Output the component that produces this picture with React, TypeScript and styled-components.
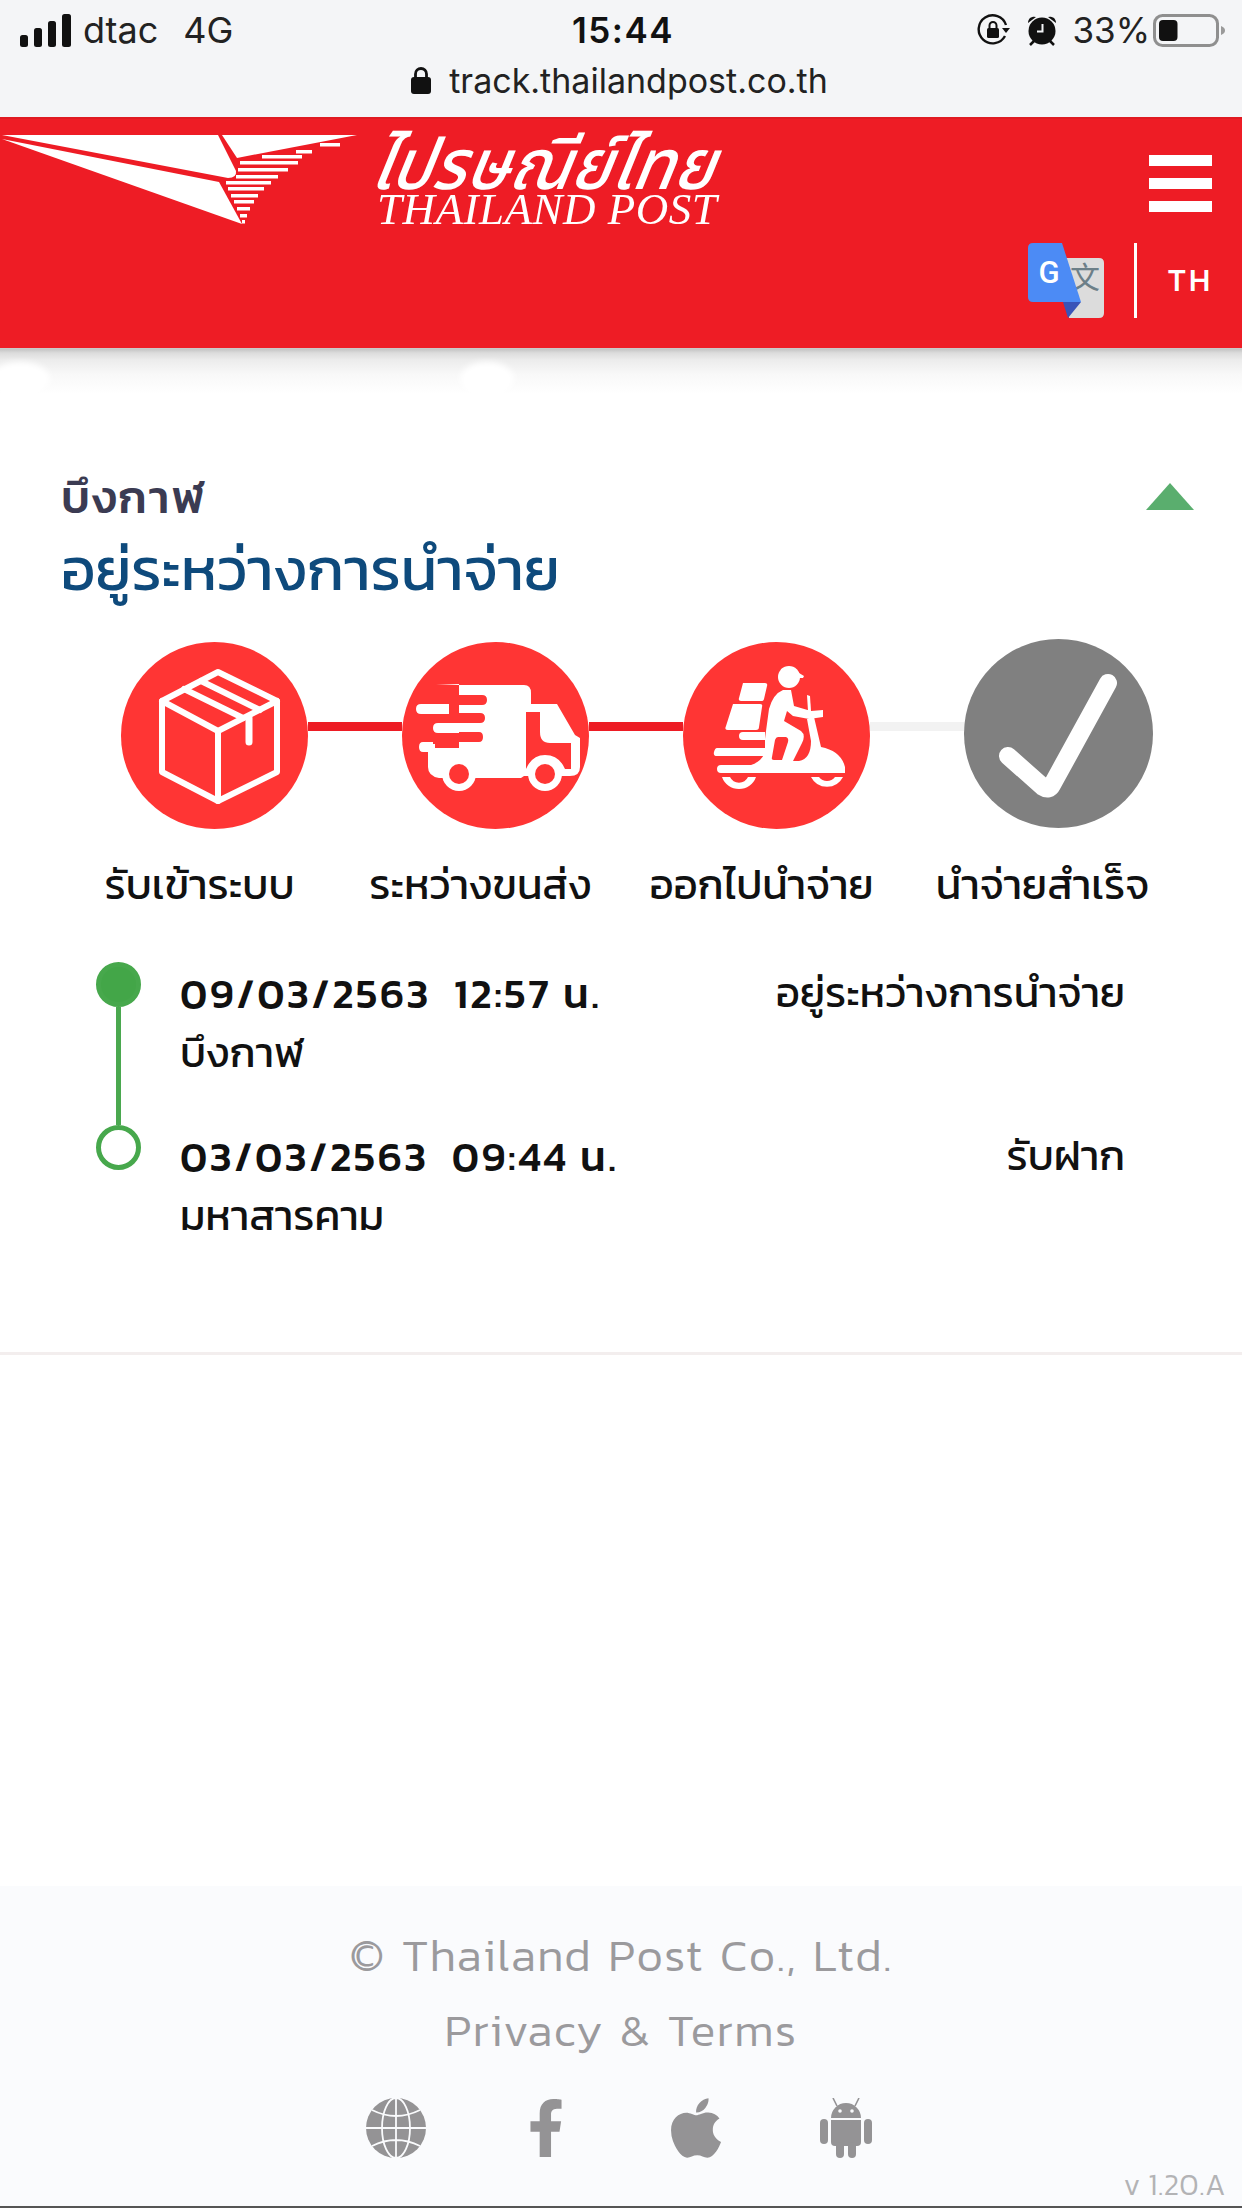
import React from 'react';
import styled, { createGlobalStyle } from 'styled-components';
import { FaFacebookF, FaApple } from 'react-icons/fa';

const Global = createGlobalStyle`
  html, body { margin: 0; padding: 0; background: #fff; }
  * { box-sizing: border-box; }
`;
const Page = styled.div`
  width: 1242px; height: 2208px; display: flex; flex-direction: column; overflow: hidden;
  font-family: Kanit, "Noto Sans Thai", "Noto Sans", sans-serif; color: #111;
`;

/* ---- status bar ---- */
const StatusBar = styled.div`
  height: 117px; background: #f4f5f7; padding: 13px 16px 0 20px; flex: none;
  font-family: Inter, "Liberation Sans", sans-serif; color: #222;
`;
const StatusRow = styled.div`
  display: grid; grid-template-columns: 1fr auto 1fr; align-items: center; height: 34px;
`;
const StatusLeft = styled.div`display: flex; align-items: center; gap: 12px;`;
const StatusRight = styled.div`display: flex; align-items: center; justify-content: flex-end;`;
const Carrier = styled.span<{ $gap: number }>`
  font-size: 36px; line-height: 34px; margin-right: ${p => p.$gap}px; font-weight: 400;
`;
const Clock = styled.span`font-size: 35px; line-height: 34px; font-weight: 600; letter-spacing: 1.5px; color: #111;`;
const Percent = styled.span`font-size: 35px; line-height: 34px; margin: 0 3px 0 15px;`;
const UrlRow = styled.div`
  display: flex; align-items: center; justify-content: center; gap: 18px; margin: 16px 0 0 -7px; height: 34px;
  font-size: 34px; color: #222;
`;
const StatusIcon = styled.svg`display: block; flex: none;`;
const RotLockIcon = styled(StatusIcon)`margin-right: 16px;`;

/* ---- header ---- */
const Header = styled.header`
  height: 231px; background: #ee1c25; flex: none; display: flex; justify-content: space-between; align-items: flex-start;
  padding: 15px 30px 0 0; border-top: 2px solid #e01a22; box-shadow: 0 1px 0 #c9c9c9;
  position: relative; z-index: 1;
`;
const Logo = styled.div`display: flex; align-items: flex-start; gap: 20px; color: #fff;`;
const PlaneMark = styled.svg`display: block; flex: none;`;
const LogoWords = styled.div`
  display: flex; flex-direction: column; width: 344px; overflow: visible;
  font-family: "Liberation Serif", serif; font-style: italic; color: #fff;
`;
const LogoThai = styled.span`
  font-size: 67px; line-height: 60px; height: 58px; white-space: nowrap; font-family: "Noto Sans Thai", sans-serif; font-weight: 500;
  transform-origin: left top; transform: scale(1.0, 1.05) skewX(-10deg); margin-top: 2px;
`;
const LogoLatin = styled.span`
  font-size: 42px; line-height: 30px; white-space: nowrap; transform-origin: left top; transform: scale(1.07, 1.05); letter-spacing: 0.5px; font-weight: 400;
`;
const HeaderRight = styled.div`display: flex; flex-direction: column; align-items: flex-end; margin-top: 21px;`;
const Burger = styled.div`display: flex; flex-direction: column; gap: 12px;`;
const BurgerBar = styled.span`display: block; width: 63px; height: 11px; background: #fff;`;
const LangRow = styled.div`display: flex; align-items: center; margin-top: 31px; height: 75px;`;
const LangDivider = styled.span`display: block; width: 3px; height: 75px; background: #fff; margin: 0 30px 0 30px;`;
const LangText = styled.span`font-size: 29px; color: #fff; letter-spacing: 2.5px; font-family: Inter, sans-serif; font-weight: 600; margin-right: -1px;`;
const TranslateMark = styled.svg`display: block;`;

/* ---- main ---- */
const Main = styled.main`flex: 1; display: flex; flex-direction: column; position: relative;`;
const Shade = styled.div`
  position: absolute; left: 0; right: 0; top: 0; height: 46px;
  background: linear-gradient(#bdbdbd 0, #dcdcdc 5px, #ececec 12px, #f8f8f8 26px, #fff 100%);
`;
const Blob = styled.div<{ $x: number; $w: number }>`
  position: absolute; top: 14px; left: ${p => p.$x}px; width: ${p => p.$w}px; height: 34px; background: #fff; border-radius: 50%; filter: blur(3px);
`;
const Card = styled.section`
  height: 1007px; border-bottom: 3px solid #f3eeee; padding: 119px 48px 0 0; position: relative; flex: none;
`;
const TitleRow = styled.div`display: flex; justify-content: space-between; align-items: flex-start; padding-left: 61px;`;
const Province = styled.div`font-size: 46px; line-height: 60px; font-weight: 500; color: #3b3b52; letter-spacing: 2px;`;
const Status = styled.div`font-size: 60px; line-height: 74px; font-weight: 400; color: #0e4a7c; margin-top: 5px; white-space: nowrap;`;
const Caret = styled.div`
  width: 0; height: 0; margin-top: 16px; border-left: 24px solid transparent; border-right: 24px solid transparent; border-bottom: 27px solid #5aae6e;
`;
const Track = styled.div`display: flex; align-items: flex-start; margin: 33px 0 0 121px; height: 191px;`;
const Circle = styled.div<{ $done: boolean }>`
  width: ${p => (p.$done ? 187 : 189)}px; height: ${p => (p.$done ? 187 : 189)}px; margin-top: ${p => (p.$done ? 3 : 0)}px;
  border-radius: 50%; background: ${p => (p.$done ? '#ff3534' : '#808080')}; flex: none;
`;
const Link = styled.div<{ $done: boolean }>`
  width: 94px; height: 9px; margin-top: 83px; background: ${p => (p.$done ? '#ed1c24' : '#f2f2f2')}; flex: none;
`;
const Labels = styled.div`display: grid; grid-template-columns: repeat(4, 281px); margin: 25px 0 0 59px;`;
const StepLabel = styled.div`
  font-size: 42px; line-height: 60px; text-align: center; white-space: nowrap; color: #111; font-weight: 400;
`;
const Timeline = styled.div`display: flex; flex-direction: column; margin: 47px 0 0 96px; padding-right: 69px;`;
const Entry = styled.div`display: flex; height: 163px; gap: 39px;`;
const Rail = styled.div`display: flex; flex-direction: column; align-items: center; width: 45px; flex: none;`;
const Dot = styled.span<{ $filled: boolean }>`
  display: block; width: 45px; height: 45px; border-radius: 50%; flex: none;
  border: 5px solid #47a84c; background: ${p => (p.$filled ? '#43a648' : '#fff')};
`;
const RailLine = styled.span`display: block; width: 5px; flex: 1; background: #4aa84f;`;
const EntryBody = styled.div`flex: 1; padding-top: 1px;`;
const EntryTop = styled.div`display: flex; justify-content: space-between; align-items: center;`;
const EntryDate = styled.span`font-size: 41.5px; line-height: 60px; font-weight: 500; letter-spacing: 2.5px; color: #111; white-space: pre;`;
const EntryStatus = styled.span`font-size: 42px; line-height: 60px; color: #111;`;
const EntryPlace = styled.div`font-size: 42px; line-height: 60px; color: #111;`;

/* ---- footer ---- */
const Footer = styled.footer`
  height: 322px; flex: none; margin-top: auto; background: #fafbfd; border-bottom: 2px solid #555; color: #9b9a9d;
  display: flex; flex-direction: column; align-items: center; padding-top: 31px;
`;
const FooterLine = styled.div`font-size: 46px; line-height: 75px; font-weight: 300; letter-spacing: 1.5px; word-spacing: 4px; white-space: nowrap;`;
const SocialRow = styled.div`display: grid; grid-template-columns: repeat(4, 150px); margin-top: 27px; height: 60px; color: #949395;`;
const SocialCell = styled.div`display: flex; align-items: center; justify-content: center;`;
const Version = styled.div`
  align-self: flex-end; font-size: 30px; line-height: 34px; font-weight: 300; color: #b3b3b5; margin: 14px 16px 0 0; letter-spacing: 0.5px;
`;
const Glyph = styled.svg`display: block;`;

const Signal = () => (
  <StatusIcon width="51" height="33" viewBox="0 0 51 33" fill="#111">
    <rect x="0" y="21" width="8" height="12" rx="2.5" />
    <rect x="14" y="14" width="8" height="19" rx="2.5" />
    <rect x="28" y="7" width="8" height="26" rx="2.5" />
    <rect x="42" y="0" width="9" height="33" rx="2.5" />
  </StatusIcon>
);
const RotLock = () => (
  <RotLockIcon width="34" height="32" viewBox="0 0 34 32" fill="none">
    <path d="M28 22A14 14 0 1 1 29 11" stroke="#111" strokeWidth="2.4" />
    <path d="M25 14h8l-4 5z" fill="#111" />
    <rect x="10" y="14" width="12" height="10" rx="1.5" fill="#111" />
    <path d="M12.5 14v-2.5a3.5 3.5 0 0 1 7 0V14" stroke="#111" strokeWidth="2" />
  </RotLockIcon>
);
const Alarm = () => (
  <StatusIcon width="30" height="32" viewBox="0 0 30 32">
    <circle cx="15" cy="17" r="13.5" fill="#111" />
    <path d="M1 9a6 6 0 0 1 8-6zM29 9a6 6 0 0 0-8-6z" fill="#111" />
    <path d="M3 31l4-4M27 31l-4-4" stroke="#111" strokeWidth="2.5" />
    <path d="M15.5 10v7.5H10" stroke="#f4f5f7" strokeWidth="2" fill="none" />
  </StatusIcon>
);
const Battery = () => (
  <StatusIcon width="73" height="33" viewBox="0 0 73 33">
    <rect x="1.5" y="1.5" width="63" height="30" rx="8" fill="none" stroke="#8f8f8f" strokeWidth="3" />
    <rect x="6" y="6" width="18.5" height="21" rx="4" fill="#111" />
    <path d="M68 12c3 1 4 3 4 4.5S71 20 68 21z" fill="#9a9a9a" />
  </StatusIcon>
);
const Lock = () => (
  <StatusIcon width="20" height="27" viewBox="0 0 20 27">
    <rect x="0" y="10" width="20" height="17" rx="3" fill="#111" />
    <path d="M4.5 11V7a5.5 5.5 0 0 1 11 0v4" fill="none" stroke="#111" strokeWidth="2.8" />
  </StatusIcon>
);

const stripes: [number, number, number][] = [
  [141, 320, 340], [148, 296, 312], [153, 262, 302], [159, 240, 298], [166, 238, 288], [173, 236, 278],
  [179, 226, 271], [185, 228, 264], [192, 231, 258], [198, 234, 254], [205, 237, 250], [212, 240, 247], [218, 242, 245],
];
const Plane = () => (
  <PlaneMark width="357" height="92" viewBox="0 132 357 92" fill="#fff">
    <path d="M2 133H218L236 169Q237 176 228 176Z" />
    <path d="M2 137L219 180L242 222Z" />
    <path d="M222 133H357L237 156Z" />
    {stripes.map(([y, a, b]) => <rect key={y} x={a} y={y} width={b - a} height={3.5} />)}
  </PlaneMark>
);
const Translate = () => (
  <TranslateMark width="76" height="75" viewBox="28 23 76 75">
    <path d="M66 38H99q5 0 5 5v50q0 5-5 5H69z" fill="#dcdcdc" />
    <text x="85" y="68" fontSize="30" textAnchor="middle" fill="#6c7f88" fontFamily='"Noto Sans CJK SC", sans-serif'>文</text>
    <path d="M63 82H81L68 98z" fill="#3a53b8" />
    <path d="M33 23H62L81 82H33q-5 0-5-5V28q0-5 5-5z" fill="#4c8bf5" />
    <text x="49" y="63" fontSize="31" fontWeight="500" textAnchor="middle" fill="#fff" fontFamily="Roboto, sans-serif">G</text>
  </TranslateMark>
);
const BoxIcon = () => (
  <Glyph viewBox="0 0 187 187" width="100%" height="100%" fill="none" stroke="#fff" strokeWidth="6" strokeLinejoin="round" strokeLinecap="round">
    <path d="M97 30L156 59V130L97 159L41 130V59Z" />
    <path d="M41 59L97 89L156 59M97 89V159" />
    <path d="M80 39L139 68M63 47L122 76" />
    <path d="M128 76V100" strokeWidth="7" />
  </Glyph>
);
const TruckIcon = () => (
  <Glyph viewBox="3 3 187 187" width="100%" height="100%">
    <path d="M37 46H125Q132 46 132 54V65H158L176 96L181 99V128Q181 137 171 137H125L122 139H78L75 139H40Q29 137 29 128V113H24V105H36V109H60V45Z" fill="#fff" />
    <path d="M35 56H83Q88 56 88 61Q88 66 83 66H35ZM20 74H81Q86 74 86 79T81 84H20ZM30 93H80Q84 93 84 98T80 103H30Z" fill="#ff3534" />
    <path d="M22 65H50V75H22Q17 75 17 70T22 65ZM39 84H60V94H39Q34 94 34 89T39 84Z" fill="#fff" />
    <path d="M24 103H34V113H24Q20 113 20 108T24 103Z" fill="#fff" />
    <path d="M131 73H141V93Q141 104 151 104H172V130H166Q160 116 146 116Q133 116 127 130V73Z" fill="#ff3534" />
    <circle cx="146" cy="135" r="17" fill="#fff" />
    <circle cx="146" cy="135" r="10" fill="#ff3534" />
    <circle cx="60" cy="135" r="17" fill="#fff" />
    <circle cx="60" cy="135" r="10" fill="#ff3534" />
  </Glyph>
);
const ScooterIcon = () => (
  <Glyph viewBox="2 3 187 187" width="100%" height="100%">
    <g fill="#fff">
      <circle cx="108" cy="38" r="11" />
      <path d="M100 30Q112 24 118 34L123 37L122 39H100Z" />
      <path d="M62 44H84Q87 44 86 47L83 60Q83 62 80 62H60Q57 62 58 59Z" />
      <path d="M52 65H79Q82 65 81 68L78 88Q78 91 75 91H47Q43 91 45 87Z" />
      <path d="M85 92L88 70Q92 55 102 51H110L113 67L130 72L142 71V78L128 80L112 77L106 72L103 82L120 92Q125 96 121 104L112 122H118Q130 120 130 102L126 80L133 78L140 108Q160 112 164 128V134H40Q36 134 36 130T40 126H70Q82 122 84 112V100L85 92Z" />
      <path d="M62 93H84V101H62Q58 101 58 97T62 93ZM36 109H84V117H36Q32 117 33 113T36 109Z" />
      <path d="M126 56L129 57L130 72H127Z" />
      <path d="M41 138A18 18 0 0 0 75 138H67A10 10 0 0 1 49 138Z" />
      <path d="M130 138A18 18 0 0 0 162 138H154A10 10 0 0 1 138 138Z" />
    </g>
    <path d="M97 98H105Q108 99 107 103L101 121H93Q90 121 91 118L94 101Q95 98 97 98Z" fill="#ff3534" />
  </Glyph>
);
const CheckIcon = () => (
  <Glyph viewBox="0 0 189 189" width="100%" height="100%" fill="none" stroke="#fff" strokeWidth="18" strokeLinecap="round" strokeLinejoin="round">
    <path d="M44 117L79 148Q85 152 88 146L144 44" />
  </Glyph>
);
const Globe = () => (
  <Glyph width="60" height="60" viewBox="0 0 60 60">
    <circle cx="30" cy="30" r="30" fill="currentColor" />
    <g fill="none" stroke="#fafbfd" strokeWidth="1.8">
      <ellipse cx="30" cy="30" rx="14" ry="30" />
      <path d="M30 0V60M0 30H60M6 12Q30 24 54 12M6 48Q30 36 54 48" />
    </g>
  </Glyph>
);
const Android = () => (
  <Glyph width="52" height="60" viewBox="0 0 52 60" fill="currentColor">
    <path d="M11 20A15 15 0 0 1 41 20Z" />
    <path d="M17 8L13 0M35 8L39 0" stroke="currentColor" strokeWidth="1.6" fill="none" />
    <circle cx="20" cy="13" r="1.8" fill="#fafbfd" />
    <circle cx="32" cy="13" r="1.8" fill="#fafbfd" />
    <path d="M11 22H41V44Q41 48 37 48H15Q11 48 11 44Z" />
    <rect x="0" y="21" width="8" height="25" rx="4" />
    <rect x="44" y="21" width="8" height="25" rx="4" />
    <rect x="16" y="44" width="8" height="16" rx="4" />
    <rect x="28" y="44" width="8" height="16" rx="4" />
  </Glyph>
);

const steps = ['รับเข้าระบบ', 'ระหว่างขนส่ง', 'ออกไปนำจ่าย', 'นำจ่ายสำเร็จ'];
const entries = [
  { date: '09/03/2563  12:57 น.', status: 'อยู่ระหว่างการนำจ่าย', place: 'บึงกาฬ', filled: true },
  { date: '03/03/2563  09:44 น.', status: 'รับฝาก', place: 'มหาสารคาม', filled: false },
];

export default function App() {
  return (
    <Page>
      <Global />
      <StatusBar>
        <StatusRow>
          <StatusLeft>
            <Signal />
            <span>
              <Carrier $gap={25}>dtac</Carrier>
              <Carrier $gap={0}>4G</Carrier>
            </span>
          </StatusLeft>
          <Clock>15:44</Clock>
          <StatusRight>
            <RotLock />
            <Alarm />
            <Percent>33%</Percent>
            <Battery />
          </StatusRight>
        </StatusRow>
        <UrlRow>
          <Lock />
          <span>track.thailandpost.co.th</span>
        </UrlRow>
      </StatusBar>
      <Header>
        <Logo>
          <Plane />
          <LogoWords>
            <LogoThai>ไปรษณีย์ไทย</LogoThai>
            <LogoLatin>THAILAND POST</LogoLatin>
          </LogoWords>
        </Logo>
        <HeaderRight>
          <Burger>
            <BurgerBar />
            <BurgerBar />
            <BurgerBar />
          </Burger>
          <LangRow>
            <Translate />
            <LangDivider />
            <LangText>TH</LangText>
          </LangRow>
        </HeaderRight>
      </Header>
      <Main>
        <Shade />
        <Blob $x={-10} $w={60} />
        <Blob $x={460} $w={54} />
        <Card>
          <TitleRow>
            <div>
              <Province>บึงกาฬ</Province>
              <Status>อยู่ระหว่างการนำจ่าย</Status>
            </div>
            <Caret />
          </TitleRow>
          <Track>
            <Circle $done><BoxIcon /></Circle>
            <Link $done />
            <Circle $done><TruckIcon /></Circle>
            <Link $done />
            <Circle $done><ScooterIcon /></Circle>
            <Link $done={false} />
            <Circle $done={false}><CheckIcon /></Circle>
          </Track>
          <Labels>
            {steps.map(s => <StepLabel key={s}>{s}</StepLabel>)}
          </Labels>
          <Timeline>
            {entries.map((e, i) => (
              <Entry key={e.date}>
                <Rail>
                  <Dot $filled={e.filled} />
                  {i < entries.length - 1 && <RailLine />}
                </Rail>
                <EntryBody>
                  <EntryTop>
                    <EntryDate>{e.date}</EntryDate>
                    <EntryStatus>{e.status}</EntryStatus>
                  </EntryTop>
                  <EntryPlace>{e.place}</EntryPlace>
                </EntryBody>
              </Entry>
            ))}
          </Timeline>
        </Card>
        <Footer>
          <FooterLine>© Thailand Post Co., Ltd.</FooterLine>
          <FooterLine>Privacy &amp; Terms</FooterLine>
          <SocialRow>
            <SocialCell><Globe /></SocialCell>
            <SocialCell><FaFacebookF size={58} /></SocialCell>
            <SocialCell><FaApple size={68} /></SocialCell>
            <SocialCell><Android /></SocialCell>
          </SocialRow>
          <Version>v 1.20.A</Version>
        </Footer>
      </Main>
    </Page>
  );
}
